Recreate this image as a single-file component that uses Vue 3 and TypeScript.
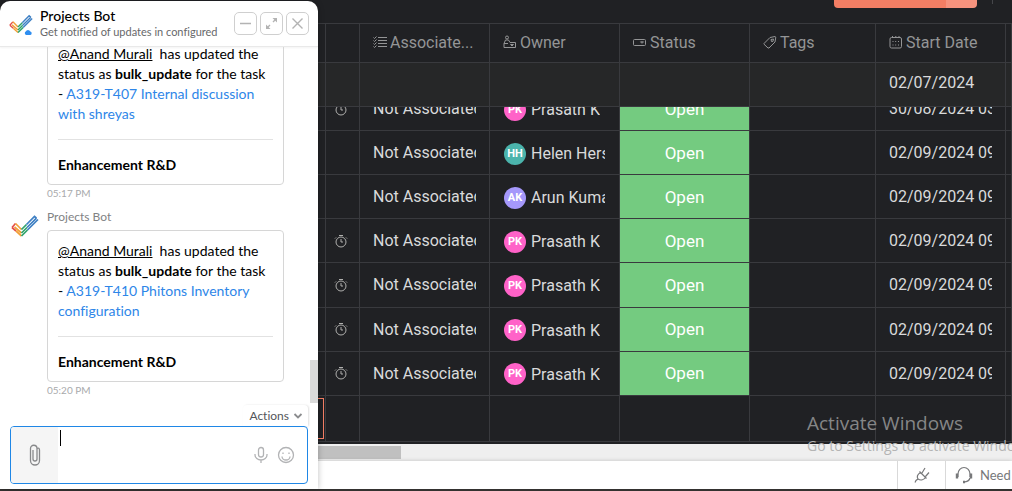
<script setup lang="ts">
import { ref } from 'vue'

interface TaskRow {
  timer: boolean
  initials: string
  owner: string
  tone: string
  date: string
}

interface Message {
  id: number
  link: string
  time: string
}

const prasath = { timer: true, initials: 'PK', owner: 'Prasath K', tone: 'pink' }

const rows: TaskRow[] = [
  { ...prasath, date: '30/08/2024 03:00 PM' },
  { timer: false, initials: 'HH', owner: 'Helen Herschel', tone: 'teal', date: '02/09/2024 09:00 AM' },
  { timer: false, initials: 'AK', owner: 'Arun Kumar', tone: 'violet', date: '02/09/2024 09:00 AM' },
  { ...prasath, date: '02/09/2024 09:00 AM' },
  { ...prasath, date: '02/09/2024 09:00 AM' },
  { ...prasath, date: '02/09/2024 09:00 AM' },
  { ...prasath, date: '02/09/2024 09:00 AM' },
]

const messages: Message[] = [
  { id: 1, link: 'A319-T407 Internal discussion with shreyas', time: '05:17 PM' },
  { id: 2, link: 'A319-T410 Phitons Inventory configuration', time: '05:20 PM' },
]

const draft = ref('')
</script>

<template>
  <div class="page">
    <svg class="defs" aria-hidden="true">
      <symbol id="bot-logo" viewBox="0 0 28 22">
        <g fill="none" stroke-width="1.7">
          <path d="M1 12.500 4.500 8.500M1 12.500 5 16" stroke="#e4504a" />
          <path d="M5 16 10.500 21M4.500 8.500 10.500 14.500M3.500 12 10.500 18" stroke="#f2a03a" />
          <path d="M10.500 21 16.500 15M10.500 14.500 15.500 9.500M10.500 18 16 12.500" stroke="#2fa36b" />
          <path d="M16.500 15 27 4.500M15.500 9.500 23.500 1.500 25.500 3.200M16 12.500 25.500 3.200" stroke="#3f80c4" />
        </g>
      </symbol>
    </svg>

    <main class="board">
      <div class="toolbar">
        <div class="split">
          <button class="add" aria-label="Add task"></button>
          <button class="more" aria-label="More ways to add"></button>
        </div>
        <span class="divider"></span>
      </div>

      <table class="sheet head">
        <colgroup>
          <col class="c-name" /><col class="c-timer" /><col class="c-wide" /><col class="c-wide" />
          <col class="c-wide" /><col class="c-tags" /><col class="c-wide" /><col />
        </colgroup>
        <thead>
          <tr>
            <th></th>
            <th></th>
            <th>
              <div class="label">
                <svg viewBox="0 0 14 14" class="ico"><path d="M5 2.500h9M5 5.500h9M5 8.500h9M5 11.500h9M.5 2.500l1 1 2-2M.5 5.500l1 1 2-2M.5 8.500l1 1 2-2M.5 11.500l1 1 2-2" /></svg>
                <span>Associate...</span>
              </div>
            </th>
            <th>
              <div class="label">
                <svg viewBox="0 0 14 14" class="ico"><circle cx="4" cy="2.500" r="1.500" /><path d="M1 12.500V8.500L2.500 5h3L7 7.500H12.500v5zM1 8.500h4M7.500 9.500h3l-1.500 1.500z" /></svg>
                <span>Owner</span>
              </div>
            </th>
            <th>
              <div class="label">
                <svg viewBox="0 0 14 14" class="ico"><rect x=".5" y="4.500" width="12" height="6" rx="1" /><path d="M7.500 6.800h3L9 8.300z" /></svg>
                <span>Status</span>
              </div>
            </th>
            <th>
              <div class="label">
                <svg viewBox="0 0 14 14" class="ico"><path d="M1 8.500 7 2.500 12 1.500 12.800 2.200 12 7 6 13 5 13 1 9.200zM8 4.500l2.500-.5-.5 2.300-1.500.2z" /></svg>
                <span>Tags</span>
              </div>
            </th>
            <th>
              <div class="label">
                <svg viewBox="0 0 14 14" class="ico"><rect x="1" y="2.500" width="11.500" height="10.500" rx="1.500" /><path d="M3.500 1v2M6.800 1v2M10 1v2M3.500 6.500h1M6.200 6.500h1M9 6.500h1M3.500 10h1M6.200 10h1M9 10h1" /></svg>
                <span>Start Date</span>
              </div>
            </th>
            <th></th>
          </tr>
          <tr class="pinned">
            <td></td><td></td><td></td><td></td><td></td><td></td>
            <td>02/07/2024</td>
            <td></td>
          </tr>
        </thead>
      </table>

      <div class="rows">
        <table class="sheet body">
          <colgroup>
            <col class="c-name" /><col class="c-timer" /><col class="c-wide" /><col class="c-wide" />
            <col class="c-wide" /><col class="c-tags" /><col class="c-wide" /><col />
          </colgroup>
          <tbody>
            <tr v-for="(row, i) in rows" :key="i">
              <td></td>
              <td class="timer">
                <svg v-if="row.timer" viewBox="0 0 14 14" class="ico"><circle cx="7" cy="8" r="5" /><path d="M7 5v3h2M5 1.500h4M2 3.500l-1 1M12 3.500l1 1" /></svg>
              </td>
              <td><div class="clip">Not Associated</div></td>
              <td class="person">
                <div class="owner">
                  <span class="avatar" :class="row.tone">{{ row.initials }}</span>
                  <span class="clip">{{ row.owner }}</span>
                </div>
              </td>
              <td class="status">Open</td>
              <td></td>
              <td><div class="clip">{{ row.date }}</div></td>
              <td></td>
            </tr>
            <tr>
              <td class="editing"><div class="edit-box"></div></td>
              <td></td><td></td><td></td><td></td><td></td><td></td><td></td>
            </tr>
          </tbody>
        </table>
      </div>

      <div class="hscroll"><div class="thumb"></div></div>

      <footer class="footer">
        <button class="foot plug" aria-label="Extensions">
          <svg viewBox="0 0 16 16" width="16" height="16"><path d="M1 15.500 2 13.500 4 12M4 12C2.500 9.500 4 7 6.500 5.500L11.500 10.500C10 12.500 7 14 4 12zM5.500 4.500 12.500 11.500M8 6 11 1M11.500 9.500 15 5.500" /></svg>
        </button>
        <a class="foot help" href="#">
          <svg viewBox="0 0 18 18" width="18" height="18"><path d="M3 11V8a6 6.500 0 0 1 12 0v3M15 12c-.5 2-2 3.500-5 3.800" /><path class="thick" d="M2 7.500v5M16 7.500v5M8 16h2" /></svg>
          <span>Need Assistance?</span>
        </a>
      </footer>
      <div class="taskbar"></div>
    </main>

    <div class="watermark">
      <div class="big">Activate Windows</div>
      <div class="small">Go to Settings to activate Windows.</div>
    </div>

    <section class="chat">
      <header class="chat-head">
        <div class="bot">
          <svg class="logo"><use href="#bot-logo" /></svg>
          <svg class="cloud" viewBox="0 0 8 6"><path d="M2 6a2 2 0 0 1-.3-3.500A2.500 2.500 0 0 1 6.300 2.500 1.800 1.800 0 0 1 6.300 6z" fill="#2f8ef0" /></svg>
        </div>
        <div class="who">
          <div class="title">Projects Bot</div>
          <div class="sub">Get notified of updates in configured</div>
        </div>
        <div class="controls">
          <button aria-label="Minimize"><svg viewBox="0 0 21 21"><path d="M5 10.500h11" /></svg></button>
          <button aria-label="Expand"><svg viewBox="0 0 21 21"><path d="M12 9l3.500-3.500M9 12l-3.500 3.500" /><path class="solid" d="M11.500 5h4.500v4.500zM5 11.500v4.500h4.500z" /></svg></button>
          <button aria-label="Close"><svg viewBox="0 0 21 21"><path d="M5.500 5.500l10 10M15.500 5.500l-10 10" /></svg></button>
        </div>
      </header>

      <div class="log">
        <div class="messages">
          <article v-for="m in messages" :key="m.id" class="message">
            <svg class="logo"><use href="#bot-logo" /></svg>
            <div class="content">
              <div class="sender">Projects Bot</div>
              <div class="card">
                <p><a class="mention" href="#">@Anand Murali</a>&nbsp; has updated the status as <b>bulk_update</b> for the task - <a class="task" href="#">{{ m.link }}</a></p>
                <hr />
                <b>Enhancement R&amp;D</b>
              </div>
              <time>{{ m.time }}</time>
            </div>
          </article>
        </div>
        <div class="vthumb"></div>
      </div>

      <div class="compose">
        <button class="actions">
          Actions
          <svg viewBox="0 0 10 8" width="10" height="8"><path d="M1.500 2 5 5.500 8.500 2" /></svg>
        </button>
        <div class="box">
          <button class="attach" aria-label="Attach a file">
            <svg viewBox="0 0 14 22" width="14" height="22"><path d="M11.500 6v10.500a4.500 4.500 0 0 1-9 0V4.500a3.200 3.200 0 0 1 6.500 0V15a2 2 0 0 1-4 0V6M9 4.500c1.500-1 2.500 0 2.500 1.500" /></svg>
          </button>
          <div class="field">
            <textarea v-model="draft" aria-label="Message"></textarea>
            <span class="caret"></span>
          </div>
          <button class="tool" aria-label="Record voice">
            <svg viewBox="0 0 18 18" width="18" height="18"><rect x="6.500" y="1.500" width="5" height="9.500" rx="2.500" /><path d="M3 8v1a6 5 0 0 0 12 0V8M9 14v3" /></svg>
          </button>
          <button class="tool" aria-label="Insert emoji">
            <svg viewBox="0 0 18 18" width="18" height="18"><circle cx="9" cy="9" r="7.500" /><path d="M5 10.500a4 3.500 0 0 0 8 0M6 6.500v1.500M12 6.500v1.500" /></svg>
          </button>
        </div>
      </div>
    </section>
  </div>
</template>

<style>
body {
  background: #202124;
}
</style>

<style scoped>
* {
  box-sizing: border-box;
}
button {
  padding: 0;
  border: 0;
  background: none;
  font: inherit;
  color: inherit;
}
a {
  text-decoration: none;
}
.defs {
  position: absolute;
  width: 0;
  height: 0;
}
.page {
  position: relative;
  height: 100vh;
  overflow: hidden;
  font-family: Roboto, "Liberation Sans", sans-serif;
  font-size: 16px;
}
.board {
  display: flex;
  flex-direction: column;
  height: 100%;
  background: #202124;
  color: #d9dadb;
}
.toolbar {
  display: flex;
  justify-content: flex-end;
  align-items: flex-start;
  height: 24px;
  gap: 15px;
  padding-right: 19px;
  border-bottom: 1px solid #393a3e;
}
.split {
  display: flex;
  height: 8px;
  border-radius: 0 0 4px 4px;
  overflow: hidden;
}
.add {
  width: 112px;
  background: #f37e64;
}
.more {
  width: 31px;
  background: #f6937e;
}
.divider {
  width: 1px;
  height: 4px;
  background: #45464a;
}
.sheet {
  width: 100%;
  table-layout: fixed;
  border-collapse: separate;
  border-spacing: 0;
}
.c-name {
  width: 326px;
}
.c-timer {
  width: 34px;
}
.c-wide {
  width: 130px;
}
.c-tags {
  width: 126px;
}
th,
td {
  padding: 0 13px;
  border-right: 1px solid #393a3e;
  border-bottom: 1px solid #393a3e;
  text-align: left;
  font-weight: 400;
  white-space: nowrap;
}
th {
  height: 39px;
  padding-bottom: 2px;
  color: #949596;
}
.pinned td {
  height: 44px;
  padding-bottom: 4px;
  background: #262728;
}
.label {
  display: flex;
  align-items: center;
  gap: 3px;
}
.ico {
  flex: none;
  width: 14px;
  height: 14px;
  fill: none;
  stroke: #949596;
  stroke-width: 1;
}
.rows {
  display: flex;
  flex-direction: column;
  justify-content: flex-end;
  flex: 1;
  min-height: 0;
  overflow: hidden;
  padding-bottom: 2px;
}
.body {
  flex: none;
  height: 355px;
}
.body td {
  height: 44px;
}
.body .timer {
  padding: 0 8px;
  vertical-align: middle;
}
.timer .ico {
  display: block;
  stroke: #b0b0ae;
}
.clip {
  overflow: hidden;
}
.body .person {
  padding: 2px 14px 0;
}
.owner {
  display: flex;
  align-items: center;
  gap: 5px;
}
.avatar {
  flex: none;
  width: 22px;
  border-radius: 50%;
  color: #fff;
  font-size: 11px;
  font-weight: 700;
  line-height: 22px;
  text-align: center;
}
.pink {
  background: #ff62c8;
}
.teal {
  background: #4bb4ac;
}
.violet {
  background: #a598fb;
}
.body .status {
  background: #74cb80;
  color: #fff;
  font-size: 17px;
  text-align: center;
}
.body .editing {
  padding: 2px 1px;
}
.edit-box {
  height: 41px;
  border: 1px solid #f37e64;
}
.hscroll {
  height: 17px;
  padding: 2px 0;
  background: #efefef;
}
.thumb {
  width: 401px;
  height: 13px;
  background: #c0c0c0;
}
.footer {
  display: flex;
  justify-content: flex-end;
  height: 28px;
  background: #fff;
  box-shadow: 0 0 4px #00000033;
}
.foot {
  display: flex;
  align-items: center;
  border-left: 1px solid #d9d9d9;
  color: #77787a;
  font-family: Lato, sans-serif;
  font-size: 13px;
  white-space: nowrap;
  overflow: hidden;
}
.foot svg {
  flex: none;
  fill: none;
  stroke: #77787a;
  stroke-width: 1.2;
}
.foot .thick {
  stroke-width: 2.4;
}
.plug {
  width: 48px;
  justify-content: center;
}
.help {
  width: 67px;
  gap: 7px;
  padding-left: 9px;
}
.taskbar {
  height: 2px;
  background: #343230;
}
.watermark {
  position: absolute;
  left: 807px;
  top: 411px;
  font-family: "Open Sans", "Noto Sans", sans-serif;
  white-space: nowrap;
}
.big {
  color: #858687;
  font-size: 19px;
  line-height: 24px;
}
.small {
  color: #b4b4b4;
  font-size: 14px;
  line-height: 22px;
}
.chat {
  position: absolute;
  left: 0;
  top: 1px;
  bottom: 2px;
  display: flex;
  flex-direction: column;
  width: 318px;
  border-radius: 10px 10px 0 0;
  background: #fff;
  box-shadow: 0 0 6px #00000040;
  overflow: hidden;
  color: #000;
  font-family: Lato, sans-serif;
  font-size: 14px;
  font-variant-ligatures: none;
  line-height: 20px;
}
.chat-head {
  display: flex;
  align-items: center;
  flex: none;
  height: 46px;
  padding: 0 9px;
  border-bottom: 1px solid #e9e9e9;
  box-shadow: 0 1px 2px #0000000d;
}
.bot {
  position: relative;
  width: 31px;
  height: 24px;
}
.logo {
  flex: none;
  width: 28px;
  height: 22px;
}
.bot .logo {
  width: 24px;
  height: 24px;
}
.cloud {
  position: absolute;
  right: 8px;
  bottom: 1px;
  width: 8px;
  height: 6px;
}
.who {
  flex: 1;
  white-space: nowrap;
}
.title {
  font-weight: 500;
  line-height: 16px;
}
.sub {
  color: #67686a;
  font-size: 11px;
  line-height: 16px;
}
.controls {
  display: flex;
  gap: 3px;
}
.controls button {
  width: 23px;
  height: 23px;
  border: 1px solid #cfcfcf;
  border-radius: 5px;
}
.controls svg {
  display: block;
  fill: none;
  stroke: #b3b3b3;
  stroke-width: 1.4;
}
.controls .solid {
  fill: #b3b3b3;
  stroke: none;
}
.log {
  display: flex;
  flex: 1;
  min-height: 0;
  align-items: flex-end;
  justify-content: space-between;
  overflow: hidden;
}
.messages {
  padding-left: 11px;
}
.message {
  display: flex;
  align-items: flex-start;
  gap: 8px;
  padding: 1px 0 6px;
}
.message .logo {
  margin-top: 8px;
}
.sender {
  padding-bottom: 3px;
  color: #818284;
  font-size: 12px;
}
.card {
  width: 237px;
  padding: 10px 10px 9px;
  border: 1px solid #d6d6d6;
  border-radius: 4px;
}
.card p {
  margin: 0;
}
.card hr {
  height: 1px;
  margin: 15px 0;
  border: 0;
  background: #e2e2e2;
}
.mention {
  color: #000;
  text-decoration: underline;
}
.task {
  color: #2e86e8;
}
time {
  display: block;
  padding-top: 1px;
  color: #a9aaac;
  font-size: 10px;
  line-height: 14px;
}
.vthumb {
  width: 8px;
  height: 43px;
  background: #dadada;
}
.compose {
  display: flex;
  flex-direction: column;
  align-items: flex-end;
  padding: 2px 10px 5px;
}
.actions {
  display: flex;
  align-items: center;
  gap: 4px;
  height: 21px;
  padding: 0 5px 0 6px;
  border-radius: 4px 4px 0 0;
  box-shadow: 1px 0 2px #0000001f;
  color: #55565a;
  font-size: 12px;
}
.actions svg {
  fill: none;
  stroke: #8b8c8e;
  stroke-width: 1.8;
}
.box {
  display: flex;
  align-items: center;
  width: 100%;
  height: 58px;
  border: 1px solid #1f87e6;
  border-radius: 4px;
  overflow: hidden;
  padding-right: 12px;
}
.attach {
  display: flex;
  align-items: center;
  justify-content: center;
  width: 47px;
  height: 100%;
  background: #f5f5f5;
}
.attach svg {
  fill: none;
  stroke: #88898b;
  stroke-width: 1.3;
}
.field {
  position: relative;
  flex: 1;
  height: 100%;
}
textarea {
  display: block;
  width: 100%;
  height: 100%;
  padding: 2px;
  border: 0;
  outline: 0;
  resize: none;
  font: inherit;
}
.caret {
  position: absolute;
  left: 2px;
  top: 3px;
  width: 1px;
  height: 16px;
  background: #000;
}
.tool {
  width: 18px;
  height: 18px;
  margin-left: 7px;
}
.tool svg {
  display: block;
  fill: none;
  stroke: #b2b3b5;
  stroke-width: 1.3;
}
</style>
